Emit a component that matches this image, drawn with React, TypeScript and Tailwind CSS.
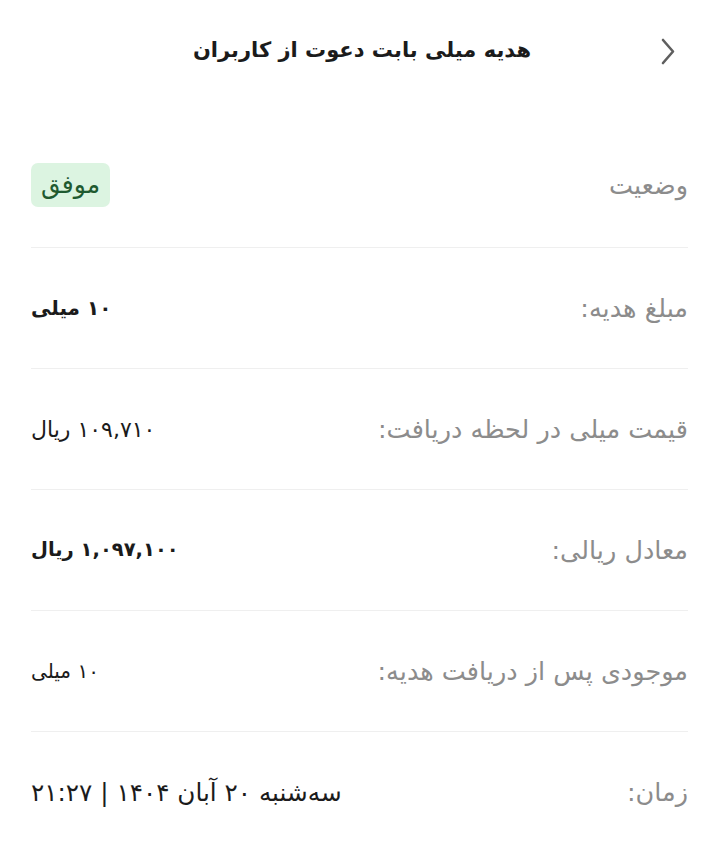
const rows: { label: string; value: string; bold?: boolean; size?: string }[] = [
  { label: 'مبلغ هدیه:', value: '۱۰ میلی', bold: true, size: 'text-[20px]' },
  { label: 'قیمت میلی در لحظه دریافت:', value: '۱۰۹,۷۱۰ ریال', size: 'text-[22px]' },
  { label: 'معادل ریالی:', value: '۱,۰۹۷,۱۰۰ ریال', bold: true, size: 'text-[19.5px]' },
  { label: 'موجودی پس از دریافت هدیه:', value: '۱۰ میلی', size: 'text-[20px]' },
  { label: 'زمان:', value: 'سه‌شنبه ۲۰ آبان ۱۴۰۴ | ۲۱:۲۷', size: 'text-[24.7px]' },
];

function ChevronRight() {
  return (
    <svg width="22" height="30" viewBox="0 0 22 30" fill="none">
      <path d="M6 3 L16 14.5 L6 26" stroke="#5f5f5f" strokeWidth="2.6" strokeLinecap="round" strokeLinejoin="round" />
    </svg>
  );
}

export default function App() {
  return (
    <div
      dir="rtl"
      className="w-[719px] h-[852px] bg-white overflow-hidden text-[#1b1b1b]"
      style={{ fontFamily: '"DejaVu Sans", sans-serif' }}
    >
      <div className="h-[104px] flex items-start pt-[37px] pr-[40px]">
        <div className="flex items-center gap-[126px]">
          <ChevronRight />
          <h1 className="text-[21px] font-bold leading-[32px] -mt-[4px]">هدیه میلی بابت دعوت از کاربران</h1>
        </div>
      </div>

      <div className="px-[31px] pt-[23px]">
        <div className="h-[121px] flex items-center justify-between border-b border-[#efefef]">
          <span className="text-[25.5px] text-[#8c8c8c] -mt-[3px]">وضعیت</span>
          <span className="h-[44px] w-[79px] rounded-[7px] bg-[#dcf4e1] text-[#1f5a30] text-[25px] flex items-center justify-center -mt-[5px]">
            موفق
          </span>
        </div>
        {rows.map((r, i) => (
          <div
            key={r.label}
            className={`h-[121px] flex items-center justify-between ${i < rows.length - 1 ? 'border-b border-[#efefef]' : ''}`}
          >
            <span className="text-[25.5px] text-[#8c8c8c]">{r.label}</span>
            <span className={`${r.size} ${r.bold ? 'font-bold' : ''}`}>{r.value}</span>
          </div>
        ))}
      </div>
    </div>
  );
}
